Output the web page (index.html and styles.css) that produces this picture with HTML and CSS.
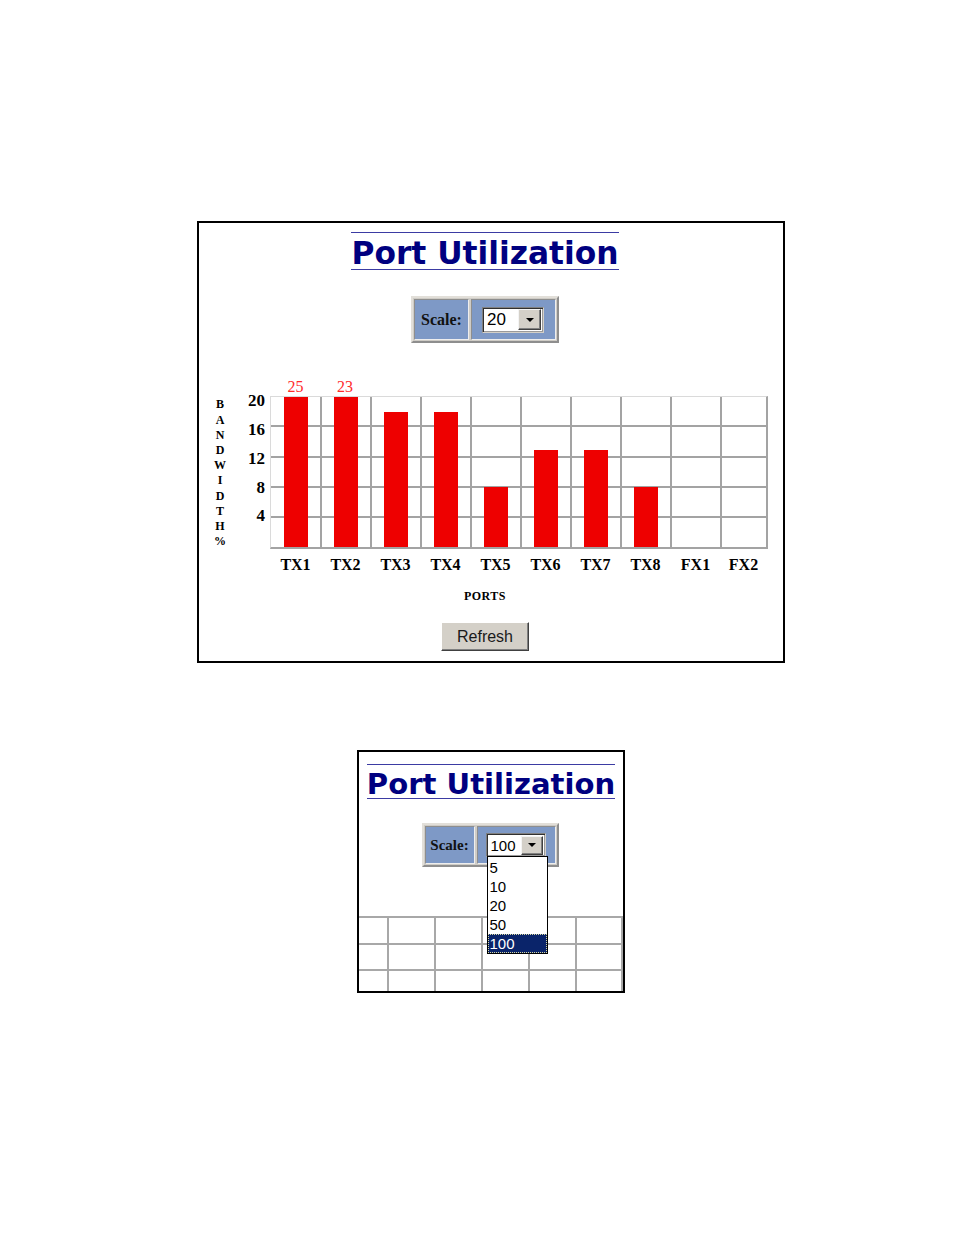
FILE: index.html
```html
<!DOCTYPE html>
<html lang="en">
<head>
<meta charset="utf-8">
<title>Port Utilization</title>
<link rel="stylesheet" href="styles.css">
</head>
<body>
<div class="page">
  <section class="panel p1">
    <div class="centered title-row"><span class="title">Port Utilization</span></div>
    <div class="centered scale-row">
      <div class="scalebox">
        <div class="cell label">Scale:</div>
        <div class="cell sel-cell">
          <div class="select"><span class="sel-val">20</span><span class="sel-btn"><span class="tri"></span></span></div>
        </div>
      </div>
    </div>
    <div class="chart">
      <div class="axis-title"><span>B</span><span>A</span><span>N</span><span>D</span><span>W</span><span>I</span><span>D</span><span>T</span><span>H</span><span>%</span></div>
      <div class="y-labels"><span>20</span><span>16</span><span>12</span><span>8</span><span>4</span></div>
      <div class="plot-area">
        <div class="values"><span>25</span><span>23</span><span></span><span></span><span></span><span></span><span></span><span></span><span></span><span></span></div>
        <div class="plot">
          <div class="col"><div class="bar" style="height:100%"></div></div>
          <div class="col"><div class="bar" style="height:100%"></div></div>
          <div class="col"><div class="bar" style="height:90%"></div></div>
          <div class="col"><div class="bar" style="height:90%"></div></div>
          <div class="col"><div class="bar" style="height:40%"></div></div>
          <div class="col"><div class="bar" style="height:65%"></div></div>
          <div class="col"><div class="bar" style="height:65%"></div></div>
          <div class="col"><div class="bar" style="height:40%"></div></div>
          <div class="col"></div>
          <div class="col"></div>
        </div>
        <div class="x-labels"><span>TX1</span><span>TX2</span><span>TX3</span><span>TX4</span><span>TX5</span><span>TX6</span><span>TX7</span><span>TX8</span><span>FX1</span><span>FX2</span></div>
      </div>
    </div>
    <div class="centered ports">PORTS</div>
    <div class="centered btn-row"><button class="refresh" type="button">Refresh</button></div>
  </section>

  <section class="panel p2">
    <div class="title-row2"><span class="title title2">Port Utilization</span></div>
    <div class="scale-row2">
      <div class="scalebox">
        <div class="cell label label2">Scale:</div>
        <div class="cell sel-cell2">
          <div class="select select2"><span class="sel-val sel-val2">100</span><span class="sel-btn sel-btn2"><span class="tri"></span></span>
            <ul class="dropdown">
              <li>5</li>
              <li>10</li>
              <li>20</li>
              <li>50</li>
              <li class="selected">100</li>
            </ul>
          </div>
        </div>
      </div>
    </div>
    <div class="grid2"></div>
  </section>
</div>
</body>
</html>
```

FILE: styles.css
```css
body {
  margin: 0;
  background: #fff;
  font-family: "Liberation Serif", "Times New Roman", serif;
  color: #000;
}

.page {
  padding-top: 221px;
  padding-bottom: 40px;
}

.panel {
  box-sizing: border-box;
  border: 2px solid #000;
  background: #fff;
}

.p1 {
  margin-left: 197px;
  width: 588px;
  height: 442px;
}

.centered {
  display: flex;
  justify-content: center;
  padding-right: 12px;
}

.title-row {
  padding-top: 9px;
}

.title {
  display: inline-block;
  font-family: "DejaVu Sans", Verdana, sans-serif;
  font-weight: bold;
  color: #000080;
  font-size: 31.3px;
  line-height: 31px;
  padding-top: 5px;
  border-top: 1px solid #3b3ba3;
  border-bottom: 1px solid #3b3ba3;
  white-space: nowrap;
}

.scale-row {
  margin-top: 26px;
}

.scalebox {
  display: flex;
  gap: 2px;
  padding: 1px;
  border: 2px solid;
  border-color: #e2dfd9 #8e8e8e #8e8e8e #e2dfd9;
  background: #cfccc6;
}

.cell {
  box-sizing: border-box;
  display: flex;
  align-items: center;
  height: 41px;
  background: #7e99c6;
  border: 1px solid;
  border-color: #8e8e8e #eeeeee #eeeeee #8e8e8e;
}

.label {
  width: 55px;
  justify-content: center;
  font-weight: bold;
  font-size: 16px;
  color: #111;
}

.sel-cell {
  width: 85px;
  padding-left: 10px;
}

.select {
  position: relative;
  box-sizing: border-box;
  display: flex;
  align-items: center;
  justify-content: space-between;
  width: 62px;
  height: 26px;
  background: #fff;
  border: 1px solid;
  border-color: #808080 #d4d0c8 #d4d0c8 #808080;
  box-shadow: inset 1px 1px #303030, inset -1px -1px #9a9a9a;
  padding: 2px;
}

.sel-val {
  font-family: "Liberation Sans", Arial, sans-serif;
  font-size: 17px;
  padding-left: 2px;
}

.sel-btn {
  box-sizing: border-box;
  display: flex;
  align-items: center;
  justify-content: center;
  width: 23px;
  height: 21px;
  background: #d4d0c8;
  border: 1px solid;
  border-color: #f4f4f4 #404040 #404040 #f4f4f4;
  box-shadow: inset -1px -1px #808080;
}

.tri {
  width: 0;
  height: 0;
  border-left: 4px solid transparent;
  border-right: 4px solid transparent;
  border-top: 4px solid #000;
}

/* chart */
.chart {
  display: flex;
  align-items: flex-start;
  margin-top: 35px;
  padding-left: 9px;
}

.axis-title {
  width: 24px;
  margin-top: 19.4px;
  display: flex;
  flex-direction: column;
  align-items: center;
  font-weight: bold;
  font-size: 12px;
  line-height: 15.2px;
}

.y-labels {
  width: 33px;
  margin-top: 9.3px;
  display: flex;
  flex-direction: column;
  align-items: flex-end;
  font-weight: bold;
  font-size: 17px;
}

.y-labels span {
  height: 28.75px;
  line-height: 28.75px;
}

.plot-area {
  margin-left: 5px;
  width: 498px;
}

.values,
.x-labels,
.plot {
  box-sizing: border-box;
  display: grid;
  grid-template-columns: 49px repeat(8, 50px) 46px;
}

.values,
.x-labels {
  padding: 0 2px 0 1px;
}

.values span {
  text-align: center;
  color: #ff2b2b;
  font-size: 16px;
  line-height: 18px;
  height: 18px;
}

.plot {
  height: 153px;
  border-style: solid;
  border-width: 1px 2px 2px 1px;
  border-color: #dadada #a3a3a3 #a3a3a3 #dadada;
}

.col {
  box-sizing: border-box;
  height: 150px;
  display: flex;
  align-items: flex-end;
  justify-content: center;
  background: repeating-linear-gradient(to bottom, transparent 0, transparent 28.3px, #a3a3a3 28.3px, #a3a3a3 30.3px);
}

.col + .col {
  border-left: 2px solid #a3a3a3;
}

.bar {
  width: 24px;
  background: #ee0000;
}

.x-labels span {
  text-align: center;
  font-weight: bold;
  font-size: 16px;
  line-height: 31px;
  height: 31px;
}

.x-labels span + span {
  padding-left: 1px;
}

.ports {
  margin-top: 6px;
  line-height: 20px;
  font-weight: bold;
  font-size: 12px;
  letter-spacing: 0.5px;
}

.btn-row {
  margin-top: 16px;
}

.refresh {
  width: 88px;
  height: 29px;
  padding: 0;
  font-family: "Liberation Sans", Arial, sans-serif;
  font-size: 16px;
  color: #1a1a1a;
  background: #d4d0c8;
  border: 1px solid;
  border-color: #ffffff #404040 #404040 #ffffff;
  box-shadow: inset -1px -1px #808080;
}

/* second panel */
.p2 {
  margin-top: 87px;
  margin-left: 357px;
  width: 268px;
  height: 243px;
  display: flex;
  flex-direction: column;
  overflow: hidden;
}

.title-row2 {
  display: flex;
  justify-content: center;
  padding-top: 12px;
}

.title2 {
  font-size: 29.1px;
  line-height: 28px;
  padding-top: 5px;
}

.scale-row2 {
  display: flex;
  justify-content: center;
  margin-top: 24px;
  padding-right: 2px;
}

.scale-row2 .cell {
  height: 38px;
}

.label2 {
  width: 50px;
  font-size: 15px;
}

.sel-cell2 {
  width: 79px;
  padding-left: 8px;
}

.select2 {
  width: 60px;
  height: 24px;
  z-index: 2;
}

.sel-val2 {
  font-size: 15px;
}

.sel-btn2 {
  width: 22px;
  height: 19px;
}

.dropdown {
  position: absolute;
  top: 100%;
  left: 0;
  box-sizing: border-box;
  width: 61px;
  margin: 0;
  padding: 1px 0 0;
  list-style: none;
  background: #fff;
  border: 1px solid #000;
  font-family: "Liberation Sans", Arial, sans-serif;
  font-size: 15px;
}

.dropdown li {
  height: 19px;
  line-height: 20px;
  padding-left: 2px;
  color: #000;
}

.dropdown .selected {
  background: #0a246a;
  color: #fff;
  outline: 1px dotted #d8d8a0;
  outline-offset: -1px;
}

.grid2 {
  margin-top: 49px;
  flex: 1;
  background-image:
    repeating-linear-gradient(to bottom, #a8a8a8 0, #a8a8a8 2px, transparent 2px, transparent 26.67px),
    repeating-linear-gradient(to right, #a8a8a8 0, #a8a8a8 2px, transparent 2px, transparent 46.9px);
  background-position: 0 0, 28px 0;
}
```
